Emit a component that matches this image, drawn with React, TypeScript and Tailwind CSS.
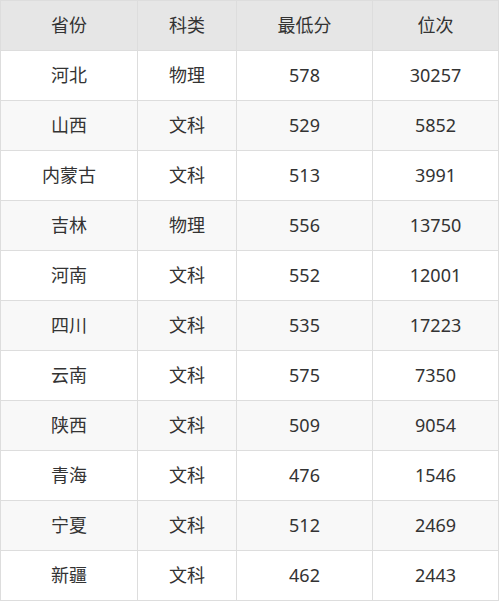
import React from "react";

const rows: [string, string, string, string][] = [
  ["河北", "物理", "578", "30257"],
  ["山西", "文科", "529", "5852"],
  ["内蒙古", "文科", "513", "3991"],
  ["吉林", "物理", "556", "13750"],
  ["河南", "文科", "552", "12001"],
  ["四川", "文科", "535", "17223"],
  ["云南", "文科", "575", "7350"],
  ["陕西", "文科", "509", "9054"],
  ["青海", "文科", "476", "1546"],
  ["宁夏", "文科", "512", "2469"],
  ["新疆", "文科", "462", "2443"],
];

const headers = ["省份", "科类", "最低分", "位次"];

function Row({ cells, bg }: { cells: string[]; bg: string }) {
  return (
    <div className={`grid grid-cols-[137px_99px_136px_126px] ${bg}`}>
      {cells.map((c, i) => (
        <div
          key={i}
          className="h-[50px] border-r border-b border-[#dddddd] flex items-center justify-center"
        >
          {c}
        </div>
      ))}
    </div>
  );
}

export default function App() {
  return (
    <div
      className="w-[500px] h-[601px] bg-white text-[#333333] text-[18px]"
      style={{ fontFamily: '"Noto Sans", "Open Sans", "Noto Sans CJK SC", sans-serif' }}
    >
      <div className="w-[499px] border-l border-t border-[#dddddd]">
        <Row cells={headers} bg="bg-[#e6e6e6]" />
        {rows.map((r, i) => (
          <Row key={i} cells={r} bg={i % 2 === 0 ? "bg-white" : "bg-[#f8f8f8]"} />
        ))}
      </div>
    </div>
  );
}
